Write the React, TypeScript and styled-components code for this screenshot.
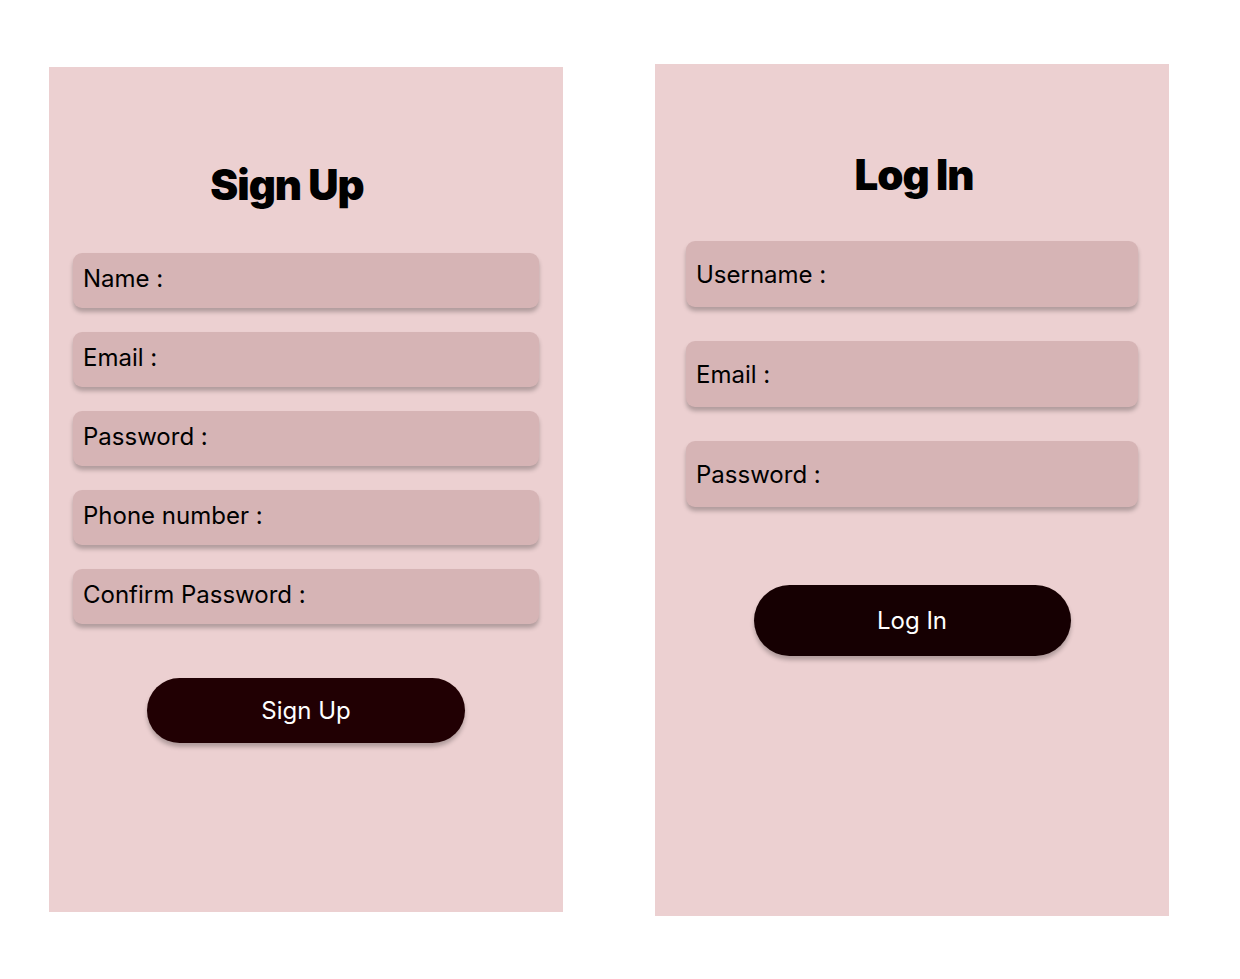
import React from "react";
import styled, { createGlobalStyle } from "styled-components";

const GlobalStyle = createGlobalStyle`
  html, body {
    margin: 0;
    padding: 0;
    background: #ffffff;
    font-family: Inter, "Noto Sans", sans-serif;
  }
`;

const Page = styled.div`
  display: flex;
  align-items: flex-start;
  padding-left: 49px;
  gap: 92px;
`;

const Panel = styled.section<{ $top: number; $height: number; $padTop: number; $padX: number }>`
  box-sizing: border-box;
  width: 514px;
  height: ${(p) => p.$height}px;
  margin-top: ${(p) => p.$top}px;
  padding: ${(p) => p.$padTop}px ${(p) => p.$padX}px 0;
  background: #ecd0d1;
  display: flex;
  flex-direction: column;
`;

const Title = styled.h1<{ $gap: number; $shift: number }>`
  margin: 0 0 ${(p) => p.$gap}px;
  padding-left: ${(p) => (p.$shift > 0 ? p.$shift * 2 : 0)}px;
  padding-right: ${(p) => (p.$shift < 0 ? -p.$shift * 2 : 0)}px;
  font-family: Inter, sans-serif;
  font-size: 42px;
  line-height: 53px;
  font-weight: 900;
  letter-spacing: -0.025em;
  color: #000;
  text-align: center;
`;

const Fields = styled.div<{ $gap: number }>`
  display: flex;
  flex-direction: column;
  gap: ${(p) => p.$gap}px;
`;

const Field = styled.div<{ $height: number; $centered?: boolean; $padL: number }>`
  box-sizing: border-box;
  height: ${(p) => p.$height}px;
  padding: ${(p) => (p.$centered ? "0" : "11px")} 0 0 ${(p) => p.$padL}px;
  background: #d6b4b5;
  border-radius: 9px;
  box-shadow: 0 4px 4px rgba(0, 0, 0, 0.25);
  display: flex;
  align-items: ${(p) => (p.$centered ? "center" : "flex-start")};
  font-size: 24px;
  line-height: 29px;
  color: #000;
`;

const Button = styled.button<{ $width: number; $height: number; $mt: number; $bg: string }>`
  align-self: center;
  width: ${(p) => p.$width}px;
  height: ${(p) => p.$height}px;
  margin-top: ${(p) => p.$mt}px;
  border: none;
  border-radius: 999px;
  background: ${(p) => p.$bg};
  box-shadow: 0 4px 4px rgba(0, 0, 0, 0.25);
  color: #fff;
  font-family: Inter, sans-serif;
  font-size: 24px;
  font-weight: 400;
  cursor: pointer;
`;

const signUpFields = ["Name :", "Email :", "Password :", "Phone number :", "Confirm Password :"];
const logInFields = ["Username :", "Email :", "Password :"];

export default function App() {
  return (
    <>
      <GlobalStyle />
      <Page>
        <Panel $top={67} $height={845} $padTop={91} $padX={24}>
          <Title $gap={42} $shift={-19}>Sign Up</Title>
          <Fields $gap={24}>
            {signUpFields.map((f) => (
              <Field key={f} $height={55} $padL={10}>
                {f}
              </Field>
            ))}
          </Fields>
          <Button $width={318} $height={65} $mt={54} $bg="#210003">
            Sign Up
          </Button>
        </Panel>
        <Panel $top={64} $height={852} $padTop={84} $padX={31}>
          <Title $gap={40} $shift={2}>Log In</Title>
          <Fields $gap={34}>
            {logInFields.map((f) => (
              <Field key={f} $height={66} $centered $padL={10}>
                {f}
              </Field>
            ))}
          </Fields>
          <Button $width={317} $height={71} $mt={78} $bg="#160002">
            Log In
          </Button>
        </Panel>
      </Page>
    </>
  );
}
